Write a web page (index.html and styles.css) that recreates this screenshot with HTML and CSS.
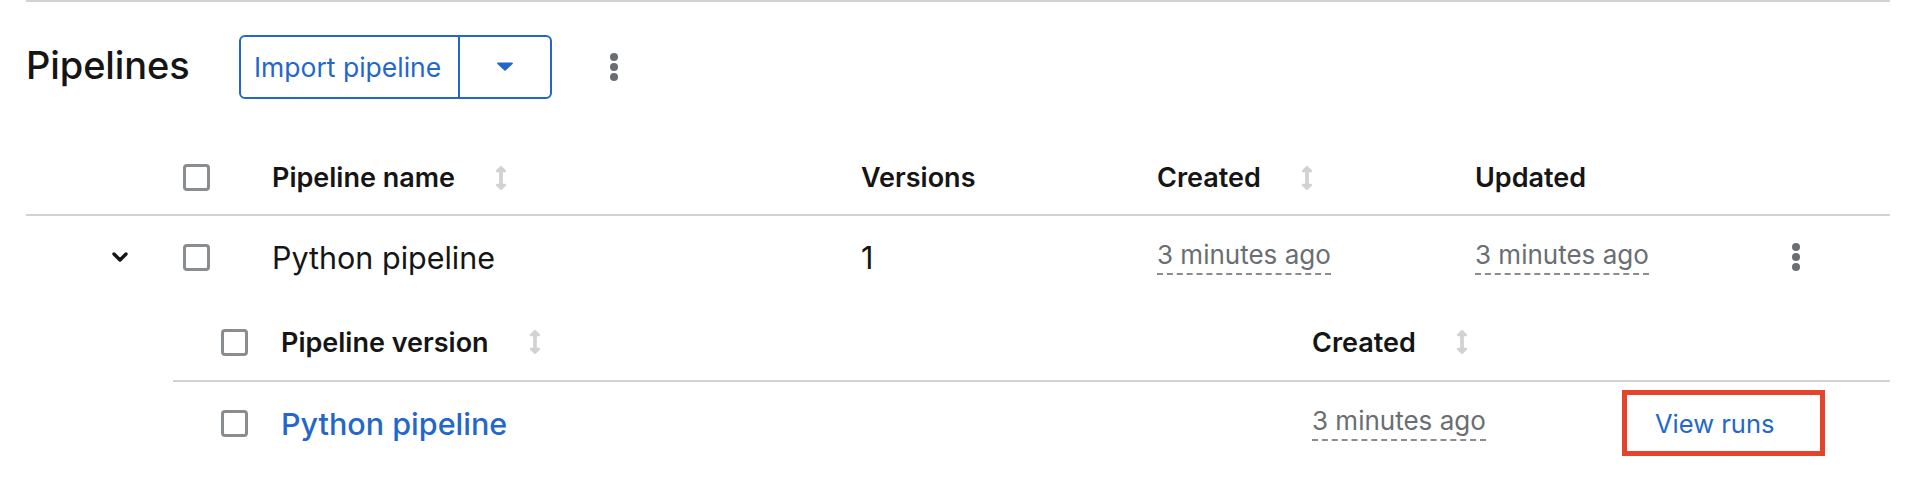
FILE: index.html
```html
<!DOCTYPE html>
<html lang="en">
<head>
<meta charset="utf-8">
<title>Pipelines</title>
<link rel="stylesheet" href="styles.css">
</head>
<body>
<div class="page">
  <div class="toolbar">
    <h1 class="title">Pipelines</h1>
    <div class="split-btn">
      <button class="split-main" type="button">Import pipeline</button>
      <button class="split-toggle" type="button" aria-label="More import options">
        <svg class="caret" viewBox="0 0 16 9" width="16" height="9"><path d="M1 0.5h14c0.8 0 1.2 1 0.6 1.6l-7 6.4c-0.35 0.33-0.85 0.33-1.2 0l-7-6.4C-0.2 1.5 0.2 0.5 1 0.5z" fill="currentColor"/></svg>
      </button>
    </div>
    <button class="kebab" type="button" aria-label="Actions"><span></span><span></span><span></span></button>
  </div>

  <div class="table">
    <div class="row head">
      <div class="cell expand"></div>
      <div class="cell check"><span class="checkbox"></span></div>
      <div class="cell th">Pipeline name <svg class="sort" viewBox="0 0 256 512"><path d="M214.059 377.941H168V134.059h46.059c21.382 0 32.090-25.851 16.971-40.971L144.971 7.029c-9.373-9.373-24.568-9.373-33.941 0L24.971 93.088c-15.119 15.119-4.411 40.971 16.971 40.971H88v243.882H41.941c-21.382 0-32.090 25.851-16.971 40.971l86.059 86.059c9.373 9.373 24.568 9.373 33.941 0l86.059-86.059c15.120-15.119 4.412-40.971-16.970-40.971z"/></svg></div>
      <div class="cell th">Versions</div>
      <div class="cell th">Created <svg class="sort" viewBox="0 0 256 512"><path d="M214.059 377.941H168V134.059h46.059c21.382 0 32.090-25.851 16.971-40.971L144.971 7.029c-9.373-9.373-24.568-9.373-33.941 0L24.971 93.088c-15.119 15.119-4.411 40.971 16.971 40.971H88v243.882H41.941c-21.382 0-32.090 25.851-16.971 40.971l86.059 86.059c9.373 9.373 24.568 9.373 33.941 0l86.059-86.059c15.120-15.119 4.412-40.971-16.970-40.971z"/></svg></div>
      <div class="cell th">Updated</div>
      <div class="cell action"></div>
    </div>

    <div class="row body">
      <div class="cell expand">
        <svg class="chevron" viewBox="0 0 16 10" width="16" height="10"><path d="M2 2l6 6 6-6" fill="none" stroke="currentColor" stroke-width="3.4" stroke-linecap="round" stroke-linejoin="round"/></svg>
      </div>
      <div class="cell check"><span class="checkbox"></span></div>
      <div class="cell td">Python pipeline</div>
      <div class="cell td">1</div>
      <div class="cell td"><span class="time">3 minutes ago</span></div>
      <div class="cell td"><span class="time">3 minutes ago</span></div>
      <div class="cell action"><button class="kebab" type="button" aria-label="Row actions"><span></span><span></span><span></span></button></div>
    </div>

    <div class="nested">
      <div class="nrow nhead">
        <div class="cell ncheck"><span class="checkbox"></span></div>
        <div class="cell th">Pipeline version <svg class="sort" viewBox="0 0 256 512"><path d="M214.059 377.941H168V134.059h46.059c21.382 0 32.090-25.851 16.971-40.971L144.971 7.029c-9.373-9.373-24.568-9.373-33.941 0L24.971 93.088c-15.119 15.119-4.411 40.971 16.971 40.971H88v243.882H41.941c-21.382 0-32.090 25.851-16.971 40.971l86.059 86.059c9.373 9.373 24.568 9.373 33.941 0l86.059-86.059c15.120-15.119 4.412-40.971-16.970-40.971z"/></svg></div>
        <div class="cell th">Created <svg class="sort" viewBox="0 0 256 512"><path d="M214.059 377.941H168V134.059h46.059c21.382 0 32.090-25.851 16.971-40.971L144.971 7.029c-9.373-9.373-24.568-9.373-33.941 0L24.971 93.088c-15.119 15.119-4.411 40.971 16.971 40.971H88v243.882H41.941c-21.382 0-32.090 25.851-16.971 40.971l86.059 86.059c9.373 9.373 24.568 9.373 33.941 0l86.059-86.059c15.120-15.119 4.412-40.971-16.970-40.971z"/></svg></div>
        <div class="cell"></div>
      </div>
      <div class="nrow nbody">
        <div class="cell ncheck"><span class="checkbox"></span></div>
        <div class="cell td"><a class="link" href="#">Python pipeline</a></div>
        <div class="cell td"><span class="time">3 minutes ago</span></div>
        <div class="cell"><button class="view-runs" type="button">View runs</button></div>
      </div>
    </div>
  </div>
</div>
</body>
</html>
```

FILE: styles.css
```css
* { box-sizing: border-box; }

html, body {
  margin: 0;
  padding: 0;
  background: #ffffff;
}

body {
  font-family: Inter, "Noto Sans", sans-serif;
  color: #151515;
}

.page {
  margin-left: 26px;
  width: 1864px;
  border-top: 2px solid #d2d2d2;
}

/* toolbar */
.toolbar {
  display: flex;
  align-items: center;
  height: 135px;
  padding-bottom: 6px;
}

.title {
  margin: 0 0 4px;
  font-size: 38px;
  font-weight: 500;
  letter-spacing: -0.1px;
  width: 213px;
}

.split-btn {
  display: flex;
  height: 64px;
  border: 2px solid #2467cb;
  border-radius: 6px;
}

.split-main,
.split-toggle {
  font-family: inherit;
  background: none;
  border: 0;
  color: #2467cb;
  cursor: pointer;
}

.split-main {
  width: 219px;
  padding: 0 0 0 13px;
  text-align: left;
  font-size: 26.5px;
  border-right: 2px solid #2467cb;
}

.split-toggle {
  width: 90px;
  display: flex;
  align-items: center;
  justify-content: center;
  padding: 0;
}

.kebab {
  background: none;
  border: 0;
  padding: 0;
  display: flex;
  flex-direction: column;
  gap: 2px;
  cursor: pointer;
}

.kebab span {
  width: 8px;
  height: 8px;
  border-radius: 50%;
  background: #6a6e73;
}

.toolbar .kebab {
  margin-left: 58px;
}

/* table */
.row {
  display: grid;
  grid-template-columns: 157px 89px 589px 296px 318px 305px 110px;
  align-items: center;
}

.row.head {
  height: 79px;
  padding-top: 4px;
  border-bottom: 2px solid #d2d2d2;
}

.row.body {
  height: 82px;
}

.cell {
  display: flex;
  align-items: center;
}

.expand {
  padding-left: 86px;
  color: #151515;
}

.checkbox {
  display: block;
  width: 27px;
  height: 27px;
  border: 3.5px solid #8a8d90;
  border-radius: 4px;
  background: #fff;
}

.th {
  font-size: 27px;
  font-weight: 600;
  gap: 40px;
}

.td {
  font-size: 30.5px;
  font-weight: 400;
}

.sort {
  width: 12px;
  height: 28px;
  fill: #d2d2d2;
}

.time {
  color: #6a6e73;
  font-size: 26px;
  padding-bottom: 3px;
  border-bottom: 2px dashed #8a8d90;
  line-height: 1.2;
}

.action {
  padding-left: 12px;
}

/* nested */
.nested {
  margin-left: 147px;
}

.nrow {
  display: grid;
  grid-template-columns: 108px 1031px 310px 268px;
  align-items: center;
}

.nhead {
  height: 84px;
  padding-top: 6px;
  border-bottom: 2px solid #d2d2d2;
}

.nbody {
  height: 82px;
}

.ncheck {
  padding-left: 48px;
}

.link {
  color: #2467cb;
  text-decoration: none;
  font-weight: 500;
}

.view-runs {
  font-family: inherit;
  font-size: 25.5px;
  color: #2467cb;
  background: #fff;
  width: 203px;
  height: 66px;
  border: 5px solid #e5442b;
  padding: 0 0 0 28px;
  text-align: left;
  cursor: pointer;
}
```
